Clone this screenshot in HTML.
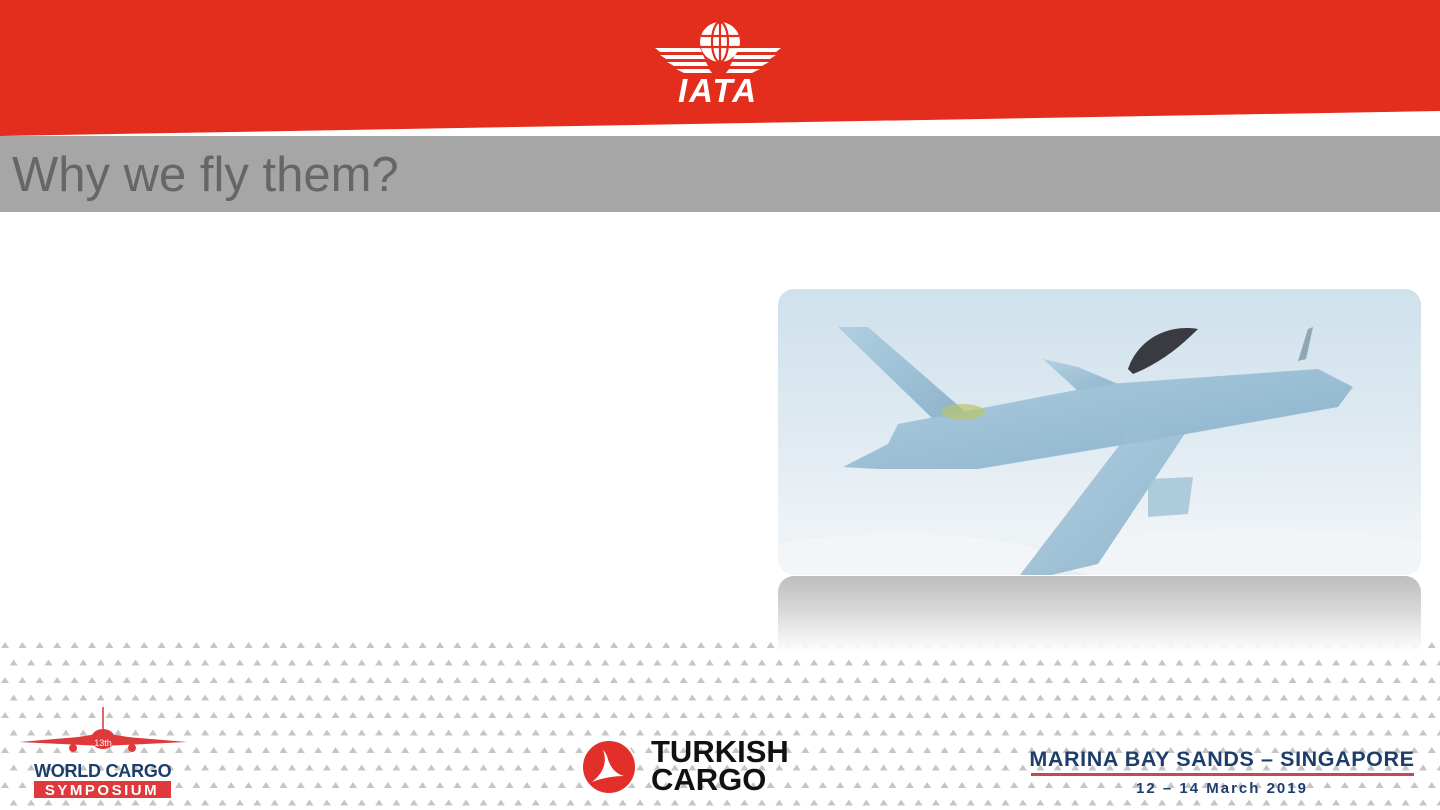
<!DOCTYPE html>
<html><head><meta charset="utf-8"><style>
*{margin:0;padding:0;box-sizing:border-box}
body{width:1440px;height:810px;position:relative;overflow:hidden;background:#fff;font-family:"Liberation Sans",sans-serif}
.abs{position:absolute}
</style></head><body>
<svg class="abs" style="left:0;top:0" width="1440" height="140">
<polygon points="0,0 1440,0 1440,111 0,136" fill="#e32d1d"/>
</svg>
<div class="abs" style="left:0;top:136px;width:1440px;height:76px;background:#a6a6a6"></div>
<div class="abs" style="left:12px;top:147px;font-size:49px;color:#666;font-family:'Liberation Sans',sans-serif">Why we fly them?</div>
<!-- IATA logo -->
<svg class="abs" style="left:650px;top:18px" width="136" height="88" viewBox="0 0 136 88">
<circle cx="70" cy="24" r="20" fill="#fff"/>
<g stroke="#e32d1d" stroke-width="2.2" fill="none">
<ellipse cx="70" cy="24" rx="8" ry="20"/><line x1="70" y1="4" x2="70" y2="44"/>
<line x1="51" y1="18" x2="89" y2="18"/><line x1="50" y1="29" x2="90" y2="29"/>
</g>
<g fill="#fff">
<polygon points="5,30 50,30 52,34 10,34"/><polygon points="10,37 53,37 55,41 16,41"/><polygon points="17,44 56,44 58,48 24,48"/><polygon points="26,51 59,51 62,55 34,55"/>
<polygon points="131,30 88,30 86,34 126,34"/><polygon points="126,37 85,37 83,41 120,41"/><polygon points="119,44 82,44 80,48 112,48"/><polygon points="110,51 79,51 76,55 102,55"/>
</g>
<text x="68" y="84" text-anchor="middle" fill="#fff" font-size="33" font-weight="bold" font-style="italic" font-family="Liberation Sans" letter-spacing="2">IATA</text>
</svg>
<!-- triangle pattern -->
<svg class="abs" style="left:0;top:638px" width="1440" height="172">
<defs><pattern id="t" width="17.4" height="35" patternUnits="userSpaceOnUse" x="1" y="3">
<polygon points="0,7 4,1 8,7" fill="#c9c4c4"/><polygon points="8.7,24.5 12.7,18.5 16.7,24.5" fill="#c9c4c4"/>
</pattern></defs>
<rect width="1440" height="172" fill="url(#t)"/>
</svg>
<!-- reflection -->
<div class="abs" style="left:778px;top:576px;width:643px;height:76px;border-radius:16px 16px 0 0;background:linear-gradient(#bdbdbd,#d8d8d8 45%,rgba(255,255,255,0.9))"></div>
<!-- plane image -->
<svg class="abs" style="left:778px;top:289px" width="643" height="286" viewBox="0 0 643 286">
<defs>
<clipPath id="c"><rect width="643" height="286" rx="16"/></clipPath>
<linearGradient id="sky" x1="0" y1="0" x2="0" y2="1"><stop offset="0" stop-color="#cfe1ec"/><stop offset="0.5" stop-color="#dfeaf1"/><stop offset="0.85" stop-color="#eef3f6"/><stop offset="1" stop-color="#e6edf2"/></linearGradient>
<linearGradient id="pl" x1="0" y1="0" x2="1" y2="1"><stop offset="0" stop-color="#a9cbdf"/><stop offset="1" stop-color="#7fa9c4"/></linearGradient>
</defs>
<g clip-path="url(#c)">
<rect width="643" height="286" fill="url(#sky)"/>
<ellipse cx="120" cy="275" rx="160" ry="30" fill="#f3f6f8"/>
<ellipse cx="480" cy="270" rx="200" ry="30" fill="#f1f5f7"/>
<polygon points="60,38 90,38 190,125 155,130" fill="url(#pl)" opacity="0.85"/>
<polygon points="265,70 300,78 340,95 300,102" fill="url(#pl)" opacity="0.8"/>
<path d="M65,178 L110,155 L120,135 L330,95 L540,80 L575,98 L560,118 L380,150 L200,180 L100,180 Z" fill="url(#pl)" opacity="0.9"/>
<polygon points="350,145 410,140 320,275 235,295" fill="url(#pl)" opacity="0.85"/>
<polygon points="370,190 415,188 410,225 370,228" fill="#9fc2d6" opacity="0.8"/>
<path d="M350,80 C360,50 390,35 420,40 C400,60 380,75 355,85 Z" fill="#3a3a42"/>
<path d="M520,72 L530,40 L535,38 L528,70 Z" fill="#8fa7b5"/>
<ellipse cx="185" cy="123" rx="22" ry="8" fill="#b9c56a" opacity="0.7"/>
</g>
</svg>
<!-- World cargo logo -->
<svg class="abs" style="left:15px;top:705px" width="175" height="95" viewBox="0 0 175 95">
<line x1="88" y1="2" x2="88" y2="28" stroke="#d33" stroke-width="1.5"/>
<polygon points="4,37 88,30 172,37 88,41" fill="#e0393b"/>
<polygon points="57,33 88,28 119,33 88,35" fill="#e0393b"/>
<ellipse cx="88" cy="34" rx="12" ry="10" fill="#e0393b"/>
<circle cx="58" cy="43" r="4" fill="#e0393b"/><circle cx="117" cy="43" r="4" fill="#e0393b"/>
<text x="88" y="41" text-anchor="middle" font-size="9" fill="#fff" font-family="Liberation Sans">13th</text>
<text x="19" y="72" font-size="18" font-weight="bold" fill="#1d3e6b" font-family="Liberation Sans" letter-spacing="-0.6" textLength="137">WORLD CARGO</text>
<rect x="19" y="76" width="137" height="17" fill="#e0393b"/>
<text x="87" y="90" text-anchor="middle" font-size="15" font-weight="bold" fill="#fff" font-family="Liberation Sans" letter-spacing="2.5">SYMPOSIUM</text>
</svg>
<!-- Turkish cargo -->
<svg class="abs" style="left:580px;top:738px" width="60" height="60" viewBox="0 0 60 60">
<circle cx="29" cy="29" r="27" fill="#e22f29" stroke="#fff" stroke-width="2"/>
<path d="M12,44 C22,40 34,38 44,38 C36,36 30,30 27,18 C25,14 24,13 23,12 C27,22 25,34 12,44 Z" fill="#fff"/>
</svg>
<div class="abs" style="left:651px;top:738px;font-size:31px;font-weight:bold;line-height:28px;color:#111;font-family:'Liberation Sans',sans-serif">TURKISH<br>CARGO</div>
<!-- Marina bay -->
<div class="abs" style="left:1020px;top:747px;width:404px;text-align:center;font-size:21.5px;font-weight:bold;color:#1d3e6b;letter-spacing:0.6px;white-space:nowrap">MARINA BAY SANDS – SINGAPORE</div>
<div class="abs" style="left:1031px;top:773px;width:383px;height:3px;background:#c44a52"></div>
<div class="abs" style="left:1020px;top:780px;width:404px;text-align:center;font-size:15px;font-weight:bold;color:#1d3e6b;letter-spacing:2px">12 – 14 March 2019</div>
</body></html>
